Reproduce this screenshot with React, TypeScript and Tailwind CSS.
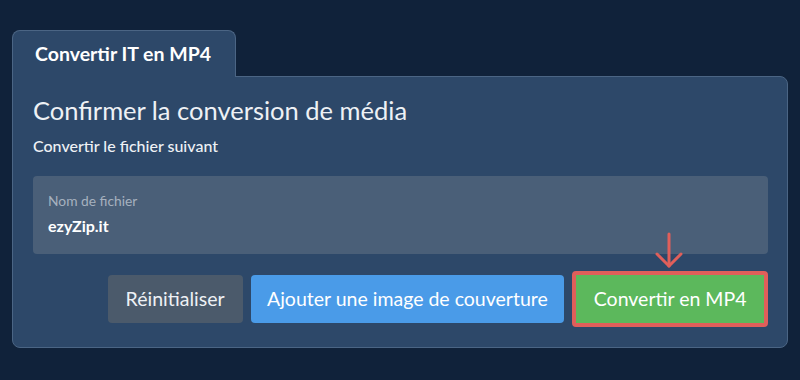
export default function App() {
  return (
    <div
      className="w-[800px] h-[380px] bg-[#10223a] pt-[30px] px-[12px] overflow-hidden"
      style={{ fontFamily: 'Lato, "Noto Sans", sans-serif' }}
    >
      <div className="relative z-10 w-[224px] h-[47px] -mb-px bg-[#2d4869] border border-b-0 border-[#4b6584] rounded-t-[8px] pl-[22px] pt-[10px]">
        <span className="text-[19.5px] font-bold text-white leading-[26px]">Convertir IT en MP4</span>
      </div>
      <div className="w-[776px] bg-[#2d4869] border border-[#4b6584] rounded-b-[8px] rounded-tr-[8px] pl-[20px] pr-[19px] pt-[16px] pb-[20px]">
        <h1 className="text-[25.5px] leading-[34px] text-[#eef1f5] font-normal">Confirmer la conversion de média</h1>
        <p className="mt-[9px] text-[16px] leading-[20px] font-medium text-[#eef1f5]">Convertir le fichier suivant</p>
        <div className="mt-[20px] h-[78px] bg-[#4a5f78] rounded-[4px] px-[15px] pt-[17px]">
          <div className="text-[13.8px] leading-[16px] text-[#a6b1bf]">Nom de fichier</div>
          <div className="mt-[7px] text-[16px] leading-[20px] font-bold text-white">ezyZip.it</div>
        </div>
        <div className="mt-[17px] flex justify-end items-center gap-[8px]">
          <button className="h-[48px] px-[18px] bg-[#4b5a6b] rounded-[4px] text-[19.5px] text-[#eef1f5]">Réinitialiser</button>
          <button className="h-[48px] px-[16.5px] bg-[#4a9be8] rounded-[4px] text-[19.5px] text-white">Ajouter une image de couverture</button>
          <div className="relative">
            <svg className="absolute left-[82px] top-[-39px]" width="30" height="38" viewBox="0 0 30 38" fill="none" stroke="#e05f5a" strokeWidth="3" strokeLinecap="round" strokeLinejoin="round">
              <path d="M15 2 L15 34" />
              <path d="M3 22 L15 34 L27 22" />
            </svg>
            <button className="h-[56px] px-[17.5px] bg-[#5cb85c] border-[4px] border-[#e05f5a] rounded-[4px] text-[19.5px] text-white">Convertir en MP4</button>
          </div>
        </div>
      </div>
    </div>
  )
}
